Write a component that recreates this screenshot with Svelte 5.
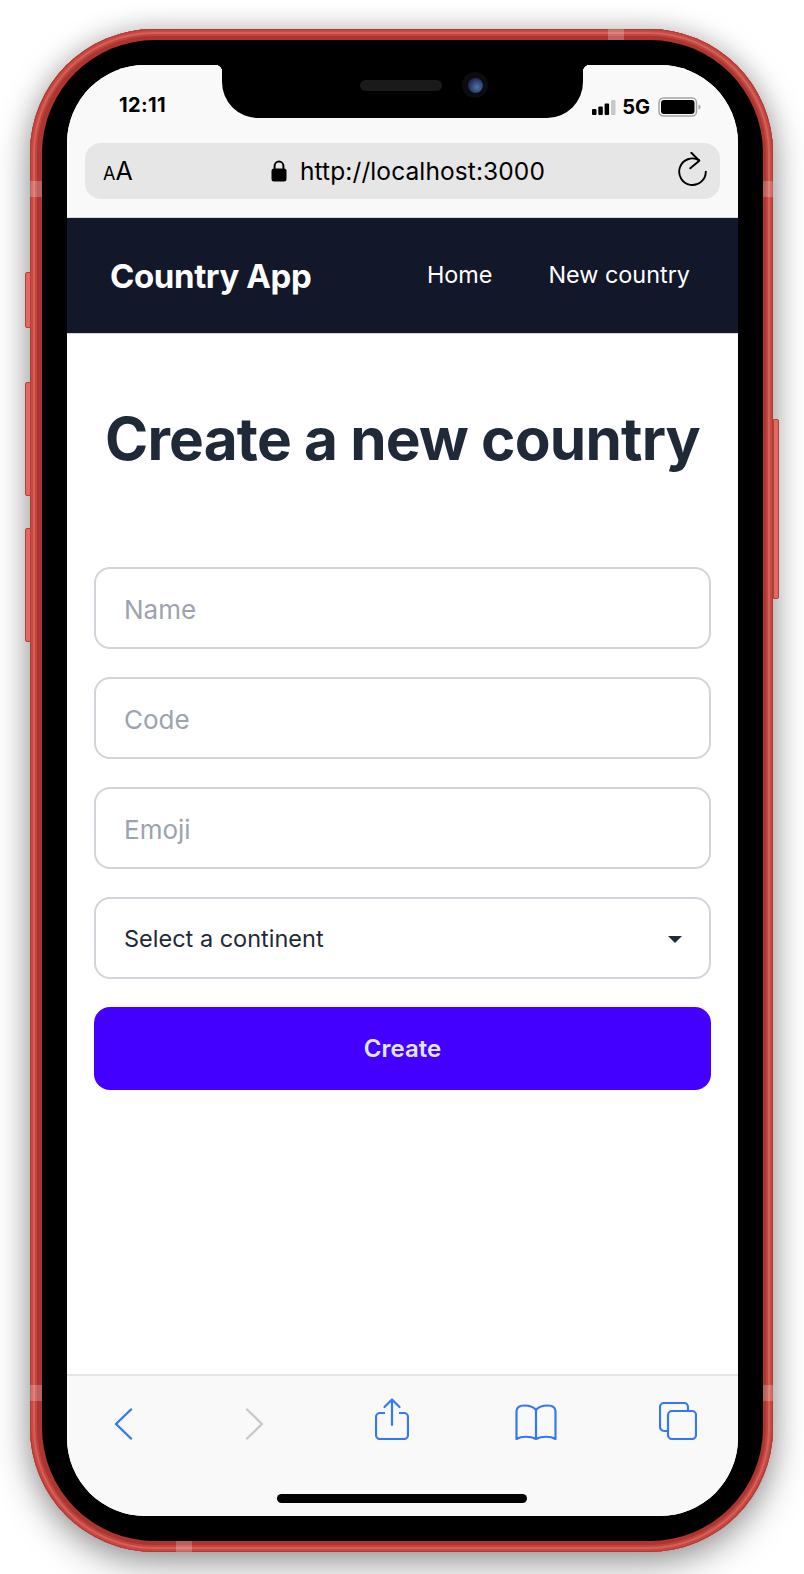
<script>
  let name = $state('');
  let code = $state('');
  let emoji = $state('');
  let continent = $state('');
</script>

<div class="stage">
  <div class="phone">
    <span class="side-btn left b1"></span>
    <span class="side-btn left b2"></span>
    <span class="side-btn left b3"></span>
    <span class="side-btn right b4"></span>
    <span class="band top-band"></span>
    <span class="band bottom-band"></span>
    <span class="band left-band upper"></span>
    <span class="band left-band lower"></span>
    <span class="band right-band upper"></span>
    <span class="band right-band lower"></span>

    <div class="bezel">
      <div class="screen">
        <div class="notch">
          <span class="speaker"></span>
          <span class="camera"><span class="lens"></span></span>
        </div>

        <div class="browser-top">
          <div class="status">
            <span class="time">12:11</span>
            <div class="status-right">
              <svg class="signal" width="24" height="15" viewBox="0 0 24 15">
                <rect x="0" y="9" width="4.5" height="6" rx="1" fill="#000" />
                <rect x="6.3" y="6.5" width="4.5" height="8.5" rx="1" fill="#000" />
                <rect x="12.6" y="3.5" width="4.5" height="11.5" rx="1" fill="#000" />
                <rect x="19" y="0" width="4.5" height="15" rx="1" fill="#c8c8c8" />
              </svg>
              <span class="net">5G</span>
              <svg class="battery" width="43" height="20" viewBox="0 0 43 20">
                <rect x="1" y="1" width="37.5" height="18" rx="4.5" fill="none" stroke="#a3a3a3" stroke-width="1.5" />
                <rect x="3" y="3" width="33.5" height="14" rx="3" fill="#000" />
                <path d="M40.5 7.5c1.5.5 2 1.3 2 2.5s-.5 2-2 2.5z" fill="#a3a3a3" />
              </svg>
            </div>
          </div>

          <div class="address">
            <span class="aa"><small>A</small>A</span>
            <div class="url">
              <svg width="16" height="22" viewBox="0 0 16 22">
                <path d="M3.6 9V6a4.4 4.4 0 0 1 8.8 0v3" fill="none" stroke="#000" stroke-width="2" />
                <rect x="0.5" y="8.5" width="15" height="13" rx="2.5" fill="#000" />
              </svg>
              <span>http://localhost:3000</span>
            </div>
            <svg class="reload" width="30" height="38" viewBox="0 0 30 38">
              <path d="M21 8.100A13.300 13.300 0 1 0 27.800 19.700" fill="none" stroke="#000" stroke-width="1.900" stroke-linecap="round" />
              <path d="M13.300 .8L21.300 8.700 12.300 16.300" fill="none" stroke="#000" stroke-width="1.900" stroke-linecap="round" stroke-linejoin="round" />
            </svg>
          </div>
        </div>

        <nav class="navbar">
          <a href="/" class="site-title">Country App</a>
          <div class="nav-links">
            <a href="/">Home</a>
            <a href="/new">New country</a>
          </div>
        </nav>

        <main class="content">
          <h1>Create a new country</h1>
          <form class="form" onsubmit={(e) => e.preventDefault()}>
            <input type="text" placeholder="Name" bind:value={name} />
            <input type="text" placeholder="Code" bind:value={code} />
            <input type="text" placeholder="Emoji" bind:value={emoji} />
            <div class="select-wrap">
              <select bind:value={continent}>
                <option value="">Select a continent</option>
                <option value="AF">Africa</option>
                <option value="AS">Asia</option>
                <option value="EU">Europe</option>
              </select>
              <svg class="caret" width="14" height="7" viewBox="0 0 14 7"><path d="M0 0h14L7 7z" fill="#1f2937" /></svg>
            </div>
            <button type="submit">Create</button>
          </form>
        </main>

        <div class="toolbar">
          <div class="tools">
            <svg class="back" width="19" height="32" viewBox="0 0 19 32">
              <path d="M17 1.500L2 16l15 14.500" fill="none" stroke="#3478f6" stroke-width="2.400" stroke-linecap="round" stroke-linejoin="round" />
            </svg>
            <svg class="forward" width="19" height="32" viewBox="0 0 19 32">
              <path d="M2 1.500L17 16 2 30.500" fill="none" stroke="#c9c9c9" stroke-width="2.400" stroke-linecap="round" stroke-linejoin="round" />
            </svg>
            <svg class="share" width="34" height="42" viewBox="0 0 34 42">
              <path d="M10 15H5a4 4 0 0 0-4 4v18a4 4 0 0 0 4 4h24a4 4 0 0 0 4-4V19a4 4 0 0 0-4-4h-5" fill="none" stroke="#3478f6" stroke-width="2.200" />
              <path d="M17 27V2M9.500 9L17 1.500 24.500 9" fill="none" stroke="#3478f6" stroke-width="2.200" stroke-linecap="round" stroke-linejoin="round" />
            </svg>
            <svg class="book" width="42" height="36" viewBox="0 0 42 36">
              <path d="M21 6C18 2 14 1.500 9 1.500 6 1.500 2 2.500 1.500 7v28c5-3 14-3 19.500 0 5.500-3 14.500-3 19.500 0V7C40 2.500 36 1.500 33 1.500 28 1.500 24 2 21 6zM21 6v29" fill="none" stroke="#3478f6" stroke-width="2.200" stroke-linejoin="round" />
            </svg>
            <svg class="tabs" width="38" height="38" viewBox="0 0 38 38">
              <path d="M9 29H5a4 4 0 0 1-4-4V5a4 4 0 0 1 4-4h20a4 4 0 0 1 4 4v4" fill="none" stroke="#3478f6" stroke-width="2.200" />
              <rect x="9" y="9" width="28" height="28" rx="4" fill="none" stroke="#3478f6" stroke-width="2.200" />
            </svg>
          </div>
          <span class="home-indicator"></span>
        </div>
      </div>
    </div>
  </div>
</div>

<style>
  :global(body) {
    background: #fff;
    font-family: Inter, "Liberation Sans", sans-serif;
  }

  .stage {
    width: 804px;
    height: 1574px;
    box-sizing: border-box;
    padding: 29px 31px 22px 30px;
    overflow: hidden;
  }

  .phone {
    position: relative;
    height: 100%;
    box-sizing: border-box;
    padding: 11px 10px 11px 12px;
    border-radius: 124px;
    background: #c2443e;
    box-shadow:
      inset 0 0 0 1px #ad3a34,
      inset 0 0 0 3px #c64a43,
      inset 0 0 0 5px #d65f56,
      inset 0 0 0 7px #c0453e,
      inset 0 0 0 12px #ab352f,
      0 12px 36px rgba(0, 0, 0, 0.36),
      0 0 26px rgba(0, 0, 0, 0.16);
  }

  .bezel {
    height: 100%;
    box-sizing: border-box;
    padding: 25px;
    background: #000;
    border-radius: 113px;
  }

  .screen {
    position: relative;
    height: 100%;
    display: flex;
    flex-direction: column;
    overflow: hidden;
    background: #fff;
    border-radius: 78px;
  }

  /* hardware bits sitting over the frame */
  .side-btn {
    position: absolute;
    background: #de6a62;
    border: 1px solid #b33f39;
    box-sizing: border-box;
  }
  .side-btn.left {
    left: -5px;
    width: 6px;
    border-radius: 2px 0 0 2px;
  }
  .side-btn.right {
    right: -6px;
    width: 6px;
    border-radius: 0 2px 2px 0;
  }
  .b1 { top: 243px; height: 56px; }
  .b2 { top: 353px; height: 114px; }
  .b3 { top: 499px; height: 114px; }
  .b4 { top: 390px; height: 180px; }

  .band {
    position: absolute;
    background: rgba(255, 255, 255, 0.22);
  }
  .top-band { top: 0; left: 578px; width: 16px; height: 11px; }
  .bottom-band { bottom: 0; left: 146px; width: 16px; height: 11px; }
  .left-band { left: 0; width: 12px; height: 16px; }
  .right-band { right: 0; width: 10px; height: 16px; }
  .upper { top: 152px; }
  .lower { top: 1356px; }

  .notch {
    position: absolute;
    top: 0;
    left: 155px;
    width: 361px;
    height: 53px;
    background: #000;
    border-radius: 0 0 36px 36px;
  }
  .notch::before,
  .notch::after {
    content: '';
    position: absolute;
    top: 0;
    width: 7px;
    height: 7px;
    background: radial-gradient(circle at 0 100%, transparent 7px, #000 7.500px);
  }
  .notch::before { left: -7px; }
  .notch::after { right: -7px; transform: scaleX(-1); }

  .speaker {
    position: absolute;
    top: 15px;
    left: 138px;
    width: 82px;
    height: 11px;
    border-radius: 6px;
    background: #1a1a1a;
  }
  .camera {
    position: absolute;
    top: 7px;
    left: 240px;
    width: 26px;
    height: 26px;
    border-radius: 50%;
    background: #0c0c10;
    display: flex;
    align-items: center;
    justify-content: center;
  }
  .lens {
    width: 15px;
    height: 15px;
    border-radius: 50%;
    background: radial-gradient(circle at 60% 60%, #4a77a8, #28305e 60%, #15183a);
  }

  .browser-top {
    background: #f9f9f9;
    padding: 0 18px 19px;
    height: 153px;
    box-sizing: border-box;
    border-bottom: 1px solid #d6d8dc;
  }

  .status {
    height: 78px;
    position: relative;
    display: flex;
    justify-content: space-between;
  }
  .time {
    margin: 28px 0 0 34px;
    font-size: 20px;
    line-height: 24px;
    font-weight: 700;
    letter-spacing: 0.4px;
    color: #000;
  }
  .status-right {
    display: flex;
    align-items: center;
    height: 24px;
    margin: 30px 19px 0 0;
    gap: 9px;
  }
  .signal { margin-right: -3px; }
  .net {
    margin-right: -1px;
    font-size: 20px;
    font-weight: 700;
    line-height: 24px;
    color: #000;
  }

  .address {
    height: 56px;
    background: #e6e6e6;
    border-radius: 16px;
    display: flex;
    align-items: center;
    padding: 0 12px 0 18px;
    color: #000;
  }
  .aa {
    font-size: 25px;
    line-height: 1;
    width: 40px;
  }
  .aa small {
    font-size: 18px;
  }
  .url {
    flex: 1;
    display: flex;
    align-items: center;
    justify-content: center;
    gap: 13px;
    font-size: 24.500px;
    letter-spacing: 0.1px;
    padding-right: 5px;
  }

  .navbar {
    height: 116px;
    box-sizing: border-box;
    flex-shrink: 0;
    background: #121729;
    display: flex;
    align-items: center;
    justify-content: space-between;
    padding: 0 48px 0 43px;
    border-bottom: 1px solid #d1d5db;
  }
  .site-title {
    font-size: 33px;
    font-weight: 700;
    letter-spacing: -0.4px;
    color: #fff;
    text-decoration: none;
  }
  .nav-links {
    display: flex;
    gap: 56px;
    margin-top: -2px;
  }
  .nav-links a {
    font-size: 23.400px;
    color: #fff;
    text-decoration: none;
  }

  .content {
    flex: 1;
    padding: 0 27px;
  }
  h1 {
    margin: 0;
    padding-top: 69px;
    height: 233px;
    box-sizing: border-box;
    font-size: 58.500px;
    line-height: 72px;
    font-weight: 700;
    letter-spacing: -0.8px;
    text-align: center;
    white-space: nowrap;
    color: #1f2937;
  }

  .form {
    display: flex;
    flex-direction: column;
    gap: 28px;
  }
  input,
  select {
    display: block;
    width: 100%;
    height: 82px;
    box-sizing: border-box;
    padding: 0 28px;
    background: #fff;
    border: 2px solid #d1d5db;
    border-radius: 16px;
    font-family: inherit;
    color: #1f2937;
    outline: none;
  }
  input {
    padding-top: 2px;
    font-size: 26px;
  }
  input::placeholder {
    color: #9ca3af;
    opacity: 1;
  }
  select {
    appearance: none;
    font-size: 23.500px;
  }
  .select-wrap {
    position: relative;
  }
  .caret {
    position: absolute;
    top: 39px;
    right: 29px;
  }
  button {
    height: 83px;
    background: #4400ff;
    border: 0;
    border-radius: 16px;
    font-family: inherit;
    font-size: 24px;
    font-weight: 600;
    color: #e0e7ff;
  }

  .toolbar {
    height: 142px;
    box-sizing: border-box;
    flex-shrink: 0;
    position: relative;
    background: #f9f9f9;
    border-top: 2px solid #e5e5e5;
  }
  .tools {
    display: flex;
    align-items: flex-end;
    height: 64px;
    padding-left: 47px;
  }
  .forward { margin-left: 112px; }
  .share { margin-left: 111px; }
  .book { margin-left: 106px; }
  .tabs { margin-left: 102px; }
  .home-indicator {
    position: absolute;
    left: 210px;
    bottom: 13px;
    width: 250px;
    height: 9px;
    border-radius: 5px;
    background: #000;
  }
</style>
